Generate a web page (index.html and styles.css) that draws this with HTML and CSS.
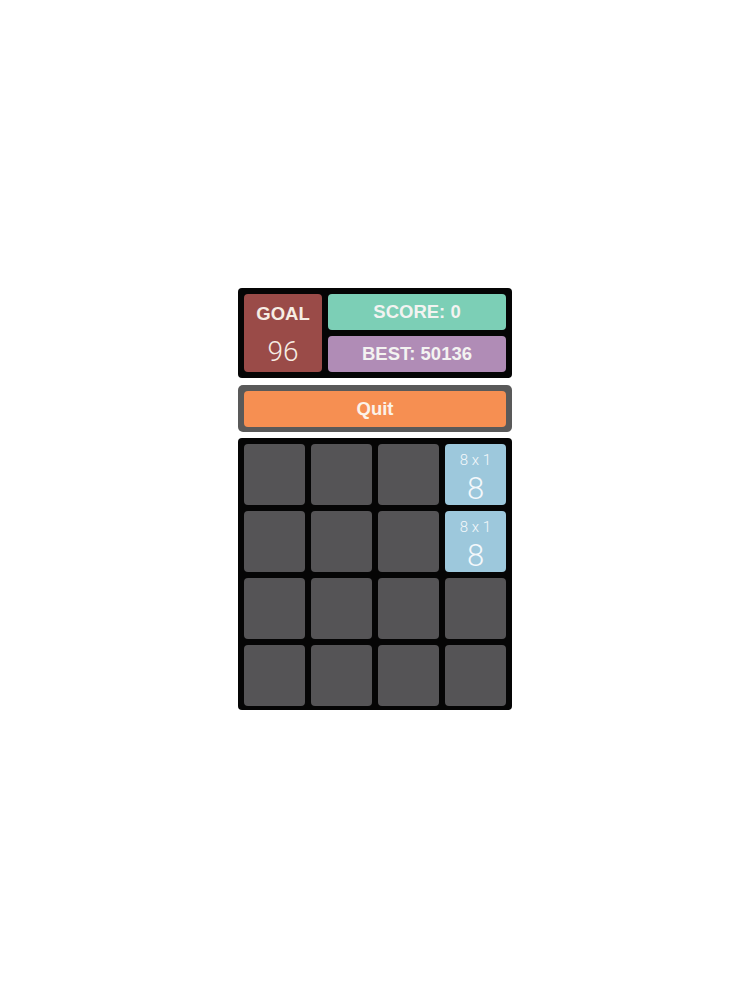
FILE: index.html
```html
<!DOCTYPE html>
<html>
<head>
<meta charset="utf-8">
<link rel="stylesheet" href="styles.css">
</head>
<body>
<div class="game">
  <div class="header">
    <div class="goal">
      <div class="goal-label">GOAL</div>
      <div class="goal-value">96</div>
    </div>
    <div class="scores">
      <div class="score">SCORE: 0</div>
      <div class="best">BEST: 50136</div>
    </div>
  </div>
  <div class="quit-wrap">
    <div class="quit">Quit</div>
  </div>
  <div class="board">
    <div class="cell"></div><div class="cell"></div><div class="cell"></div>
    <div class="cell tile"><span class="eq">8 x 1</span><span class="num">8</span></div>
    <div class="cell"></div><div class="cell"></div><div class="cell"></div>
    <div class="cell tile"><span class="eq">8 x 1</span><span class="num">8</span></div>
    <div class="cell"></div><div class="cell"></div><div class="cell"></div><div class="cell"></div>
    <div class="cell"></div><div class="cell"></div><div class="cell"></div><div class="cell"></div>
  </div>
</div>
</body>
</html>
```
FILE: styles.css
```css
html, body {
  margin: 0;
  padding: 0;
  background: #ffffff;
}
body {
  font-family: "Liberation Sans", Arial, sans-serif;
  width: 750px;
  height: 1000px;
}
.game {
  width: 274px;
  margin: 0 auto;
  padding-top: 288px;
  display: flex;
  flex-direction: column;
}
.header {
  background: #050505;
  border-radius: 4px;
  padding: 6px;
  display: flex;
  gap: 6px;
  height: 78px;
}
.goal {
  width: 78px;
  background: #9a4b48;
  border-radius: 4px;
  color: #f6ede4;
  display: flex;
  flex-direction: column;
  align-items: center;
}
.goal-label {
  font-weight: bold;
  font-size: 18.5px;
  margin-top: 10px;
  line-height: 20px;
}
.goal-value {
  font-family: Roboto, "Liberation Sans", sans-serif;
  font-size: 28px;
  line-height: 30px;
  margin-top: 13px;
  font-weight: 300;
}
.scores {
  flex: 1;
  display: flex;
  flex-direction: column;
  gap: 6px;
}
.score, .best {
  flex: 1;
  border-radius: 4px;
  color: #f3f3f1;
  font-weight: bold;
  font-size: 18.5px;
  display: flex;
  align-items: center;
  justify-content: center;
}
.score { background: #7ccfb6; }
.best { background: #b08cb6; }
.quit-wrap {
  margin-top: 7px;
  background: #595959;
  border-radius: 5px;
  padding: 6px 6px 5px;
}
.quit {
  height: 36px;
  background: #f68f52;
  border-radius: 4px;
  color: #fbf3ea;
  font-weight: bold;
  font-size: 18.5px;
  display: flex;
  align-items: center;
  justify-content: center;
}
.board {
  margin-top: 6px;
  background: #050505;
  border-radius: 4px;
  padding: 6px;
  display: grid;
  grid-template-columns: repeat(4, 61px);
  grid-template-rows: repeat(4, 61px);
  gap: 6px 6px;
  height: 260px;
  align-content: space-between;
}
.cell {
  background: #555456;
  border-radius: 4px;
}
.tile {
  background: #9dc8dc;
  color: #f4f8fb;
  display: flex;
  flex-direction: column;
  align-items: center;
  font-family: Roboto, "Liberation Sans", sans-serif;
  font-weight: 300;
}
.eq {
  font-size: 15px;
  line-height: 16px;
  margin-top: 8px;
}
.num {
  font-size: 31px;
  line-height: 34px;
  margin-top: 4px;
}
```
